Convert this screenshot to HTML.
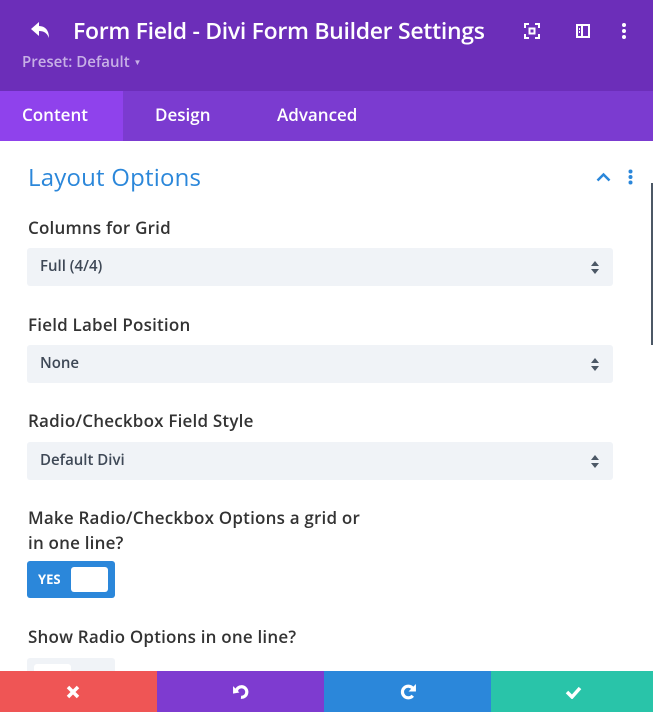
<!DOCTYPE html><html><head><style>
*{margin:0;padding:0;box-sizing:border-box}
body{width:653px;height:712px;overflow:hidden;background:#fff;font-family:"Open Sans","Liberation Sans",sans-serif;position:relative}
.hdr{position:absolute;left:0;top:0;width:653px;height:91px;background:#6c2eb9;color:#fff}
.title{position:absolute;left:73px;top:14px;font-size:23px;font-weight:600;letter-spacing:-0.3px}
.preset{position:absolute;left:22px;top:52px;font-size:15px;font-weight:600;color:#c7b0e6}
.tabs{position:absolute;top:91px;left:0;width:653px;height:50px;background:#7b3bd0;color:#fff;font-weight:600;font-size:17px}
.tabs div{position:absolute;top:0;height:50px;line-height:48px}
.lbl{position:absolute;left:28px;font-size:17px;color:#333;font-weight:600;letter-spacing:0.2px}
.sel{position:absolute;left:27px;width:586px;height:38px;background:#f0f3f7;border-radius:3px;font-size:15px;color:#3e4856;line-height:37px;padding-left:13px;font-weight:600}
.arr{position:absolute;right:14px;top:13px;width:8px;height:13px}
.foot{position:absolute;top:671px;height:41px}
</style></head><body>
<div class="hdr">
<svg style="position:absolute;left:30px;top:21px" width="22" height="18" viewBox="0 0 22 18"><path d="M9 1 L1 8 L9 15 V10 C14 10 17 12 19 17 C19 9 15 5 9 5 Z" fill="#fff"/></svg>
<div class="title">Form Field - Divi Form Builder Settings</div>
<svg style="position:absolute;left:524px;top:23px" width="16" height="16" viewBox="0 0 16 16" fill="none" stroke="#fff" stroke-width="2"><path d="M1 5V1H5M11 1H15V5M15 11V15H11M5 15H1V11"/><rect x="5.5" y="5.5" width="5" height="5"/></svg>
<svg style="position:absolute;left:575px;top:23px" width="16" height="16" viewBox="0 0 16 16" fill="none" stroke="#fff" stroke-width="2"><rect x="2" y="2" width="12" height="12"/><path d="M7 2V14M4 6H5M4 9H5"/></svg>
<svg style="position:absolute;left:621px;top:23px" width="6" height="16"><circle cx="3" cy="2" r="2" fill="#fff"/><circle cx="3" cy="8" r="2" fill="#fff"/><circle cx="3" cy="14" r="2" fill="#fff"/></svg>
<div class="preset">Preset: Default <span style="font-size:8px;vertical-align:2px">▼</span></div>
</div>
<div class="tabs">
<div style="left:0;width:123px;background:#8f42ec;padding-left:22px">Content</div>
<div style="left:155px">Design</div>
<div style="left:277px">Advanced</div>
</div>
<div style="position:absolute;left:28px;top:161px;font-size:24px;color:#2b87da;letter-spacing:0.2px">Layout Options</div>
<svg style="position:absolute;left:596px;top:172px" width="15" height="10" viewBox="0 0 15 10"><path d="M1.5 8.5L7.5 2.5L13.5 8.5" stroke="#2b87da" stroke-width="2.5" fill="none"/></svg>
<svg style="position:absolute;left:628px;top:169px" width="5" height="16"><circle cx="2.5" cy="2.5" r="2" fill="#2b87da"/><circle cx="2.5" cy="8" r="2" fill="#2b87da"/><circle cx="2.5" cy="13.5" r="2" fill="#2b87da"/></svg>
<div style="position:absolute;left:651px;top:183px;width:2px;height:162px;background:#4c5866"></div>

<div class="lbl" style="top:216px">Columns for Grid</div>
<div class="sel" style="top:248px">Full (4/4)<svg class="arr" viewBox="0 0 8 13"><path d="M4 0L8 5H0Z M0 8H8L4 13Z" fill="#4c5866"/></svg></div>
<div class="lbl" style="top:313px">Field Label Position</div>
<div class="sel" style="top:345px">None<svg class="arr" viewBox="0 0 8 13"><path d="M4 0L8 5H0Z M0 8H8L4 13Z" fill="#4c5866"/></svg></div>
<div class="lbl" style="top:409px">Radio/Checkbox Field Style</div>
<div class="sel" style="top:442px">Default Divi<svg class="arr" viewBox="0 0 8 13"><path d="M4 0L8 5H0Z M0 8H8L4 13Z" fill="#4c5866"/></svg></div>
<div class="lbl" style="top:505px;line-height:25px">Make Radio/Checkbox Options a grid or<br>in one line?</div>
<div style="position:absolute;left:27px;top:561px;width:88px;height:37px;background:#2b87da;border-radius:3px">
<span style="position:absolute;left:11px;top:9px;color:#fff;font-weight:700;font-size:13px">YES</span>
<div style="position:absolute;left:44px;top:6px;width:37px;height:25px;background:#fff;border-radius:3px"></div></div>
<div class="lbl" style="top:625px">Show Radio Options in one line?</div>
<div style="position:absolute;left:27px;top:658px;width:88px;height:37px;background:#f0f3f7;border-radius:3px">
<div style="position:absolute;left:7px;top:6px;width:37px;height:25px;background:#fff;border-radius:3px"></div></div>

<div class="foot" style="left:0;width:157px;background:#ef5555"><svg style="position:absolute;left:66px;top:14px" width="14" height="14"><path d="M2 2L12 12M12 2L2 12" stroke="#fff" stroke-width="3.5"/></svg></div>
<div class="foot" style="left:157px;width:167px;background:#7e3bd0"><svg style="position:absolute;left:75px;top:12px" width="18" height="18" viewBox="0 0 17 17"><path d="M4 8A5 5 0 1 1 8.5 13.5" stroke="#fff" stroke-width="3" fill="none"/><path d="M1 3L1 10L7 9Z" fill="#fff"/></svg></div>
<div class="foot" style="left:324px;width:167px;background:#2b87da"><svg style="position:absolute;left:75px;top:12px" width="18" height="18" viewBox="0 0 17 17"><path d="M13 5A5.5 5.5 0 1 0 13 12" stroke="#fff" stroke-width="3" fill="none"/><path d="M16 1V8H9Z" fill="#fff"/></svg></div>
<div class="foot" style="left:491px;width:162px;background:#29c4a9"><svg style="position:absolute;left:74px;top:15px" width="17" height="13"><path d="M2 6L7 11L15 2" stroke="#fff" stroke-width="3.5" fill="none"/></svg></div>
</body></html>
